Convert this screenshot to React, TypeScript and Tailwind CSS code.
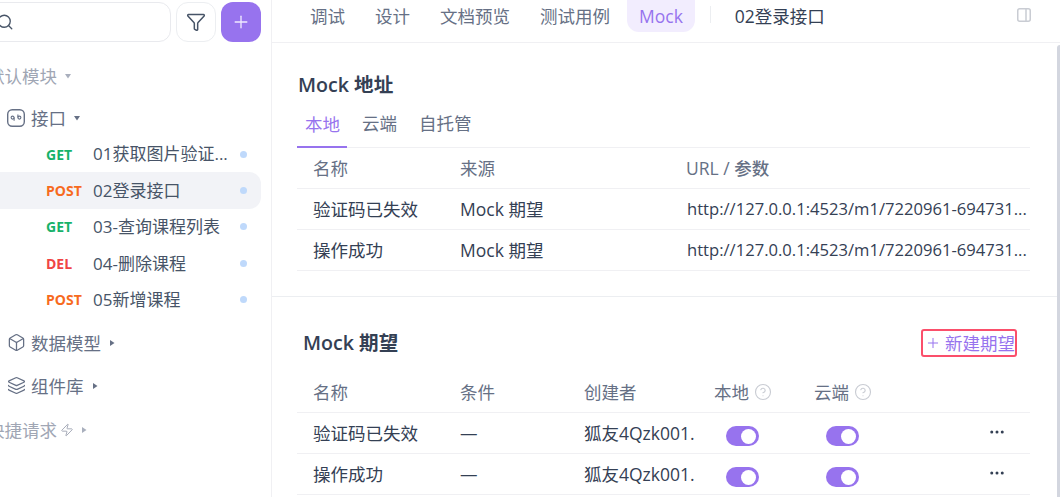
import { Filter, Plus, Search, Box, Layers, Zap, CircleHelp, Ellipsis } from "lucide-react";

const font = "font-['Open_Sans','Noto_Sans_CJK_SC',sans-serif]";

const apis = [
  { method: "GET", color: "text-[#17b26a]", name: "01获取图片验证...", active: false },
  { method: "POST", color: "text-[#f76a1e]", name: "02登录接口", active: true },
  { method: "GET", color: "text-[#17b26a]", name: "03-查询课程列表", active: false },
  { method: "DEL", color: "text-[#f04444]", name: "04-删除课程", active: false },
  { method: "POST", color: "text-[#f76a1e]", name: "05新增课程", active: false },
];

function Caret({ down = false, light = false }: { down?: boolean; light?: boolean }) {
  return (
    <svg width="8" height="8" viewBox="0 0 8 8" className={light ? "text-[#a9afbd]" : "text-[#667085]"}>
      <path d={down ? "M1 2h6L4 6.5z" : "M2 1v6l4.5-3z"} fill="currentColor" />
    </svg>
  );
}

function ApiIcon() {
  return (
    <svg width="18" height="18" viewBox="0 0 18 18" fill="none" className="text-[#667085]">
      <rect x="0.7" y="0.7" width="16.6" height="16.6" rx="4.5" stroke="currentColor" strokeWidth="1.4" />
      <circle cx="5.6" cy="8.6" r="1.5" stroke="currentColor" strokeWidth="1.1" />
      <circle cx="12.4" cy="8.6" r="1.5" stroke="currentColor" strokeWidth="1.1" />
      <path d="M7.1 8.6v3.2M10.9 8.6V5.4" stroke="currentColor" strokeWidth="1.1" />
    </svg>
  );
}

function PanelIcon() {
  return (
    <svg width="14" height="14" viewBox="0 0 14 14" fill="none" className="text-[#c9ccd3]">
      <rect x="0.75" y="0.75" width="12.5" height="12.5" rx="2" stroke="currentColor" strokeWidth="1.5" />
      <path d="M9 1v12" stroke="currentColor" strokeWidth="1.5" />
    </svg>
  );
}

function Sidebar() {
  return (
    <aside className="w-[272px] h-full shrink-0 border-r border-[#f0f0f3] flex flex-col">
      <div className="flex items-center gap-[5px] pt-[2px] ml-[-20px]">
        <div className="w-[191px] h-[40px] rounded-xl border border-[#e9eaee] flex items-center pl-[15px]">
          <Search size={18} strokeWidth={1.8} className="text-[#475467]" />
        </div>
        <div className="w-[40px] h-[40px] rounded-xl border border-[#eceef1] flex items-center justify-center">
          <Filter size={20} strokeWidth={1.8} className="text-[#475467]" />
        </div>
        <div className="w-[40px] h-[40px] rounded-xl bg-[#9773ee] flex items-center justify-center">
          <Plus size={20} strokeWidth={1.6} className="text-[#f0eaff]" />
        </div>
      </div>

      <div className="mt-[22px] h-[24px] flex items-center gap-[7px] ml-[-13px] text-[17.5px] text-[#a0a6b4]">
        默认模块 <Caret down light />
      </div>

      <div className="mt-[18px] h-[24px] flex items-center ml-[7px] text-[17.5px] text-[#667085]">
        <ApiIcon />
        <span className="ml-[6px] mr-[7px]">接口</span>
        <Caret down />
      </div>

      <ul className="mt-[6px] flex flex-col">
        {apis.map((a) => (
          <li
            key={a.name}
            className={`h-[36.4px] flex items-center pl-[46px] pr-[14px] mr-[10px] rounded-r-xl ${a.active ? "bg-[#f2f3f7]" : ""}`}
          >
            <span className={`w-[47px] text-[14px] font-bold ${a.color}`}>{a.method}</span>
            <span className="flex-1 text-[17px] text-[#475467] whitespace-nowrap">{a.name}</span>
            <span className="w-[7px] h-[7px] rounded-full bg-[#bfd9fb]" />
          </li>
        ))}
      </ul>

      <div className="mt-[13px] h-[24px] flex items-center ml-[7px] text-[17.5px] text-[#667085]">
        <Box size={19} strokeWidth={1.6} />
        <span className="ml-[5px] mr-[7px]">数据模型</span>
        <Caret />
      </div>
      <div className="mt-[19px] h-[24px] flex items-center ml-[7px] text-[17.5px] text-[#667085]">
        <Layers size={19} strokeWidth={1.6} />
        <span className="ml-[5px] mr-[7px]">组件库</span>
        <Caret />
      </div>
      <div className="mt-[20px] h-[24px] flex items-center ml-[-13px] text-[17.5px] text-[#a0a6b4]">
        <span>快捷请求</span>
        <Zap size={14} strokeWidth={1.6} className="ml-[3px] mr-[6px]" />
        <Caret light />
      </div>
    </aside>
  );
}

function TopTabs() {
  return (
    <div className="h-[43px] border-b border-[#f0f0f3] flex items-start pl-[38px] pr-[29px] text-[17.5px] text-[#667085]">
      <div className="h-[32px] flex items-center gap-[30px]">
        <span>调试</span>
        <span>设计</span>
        <span>文档预览</span>
        <span>测试用例</span>
      </div>
      <span className="ml-[17px] h-[32px] px-[12px] flex items-center rounded-b-xl bg-[#f2edfe] text-[#9773ee]">Mock</span>
      <span className="ml-[15px] mt-[6px] w-px h-[17px] bg-[#eceef1]" />
      <span className="ml-[24px] h-[32px] flex items-center text-[#344054]">02登录接口</span>
      <span className="ml-auto mt-[8px]"><PanelIcon /></span>
    </div>
  );
}

function MockUrls() {
  const rows = [
    ["验证码已失效", "Mock 期望"],
    ["操作成功", "Mock 期望"],
  ];
  const url = "http://127.0.0.1:4523/m1/7220961-694731...";
  return (
    <section className="pl-[25px] pr-[30px] pb-[25px] border-b border-[#eceef1]">
      <h2 className="pt-[28px] h-[54px] pl-px text-[19.6px] font-semibold text-[#344054] leading-[28px]">Mock 地址</h2>
      <div className="h-[51px] border-b border-[#f0f0f3] flex text-[17.5px] text-[#667085] items-end">
        <span className="h-[39px] w-[50px] pl-[8px] pt-[2px] border-b-2 border-[#9773ee] text-[#9773ee] mb-[-1px]">本地</span>
        <span className="h-[39px] pt-[2px] ml-[15px]">云端</span>
        <span className="h-[39px] pt-[2px] ml-[22px]">自托管</span>
      </div>
      <div className="h-[41px] border-b border-[#f0f0f3] flex items-center text-[17.5px] text-[#667085]">
        <span className="w-[163px] pl-[16px]">名称</span>
        <span className="w-[226px]">来源</span>
        <span className="font-medium">URL / 参数</span>
      </div>
      {rows.map(([name, source]) => (
        <div key={name} className="h-[41px] border-b border-[#f0f0f3] flex items-center text-[17.5px] text-[#344054]">
          <span className="w-[163px] pl-[16px]">{name}</span>
          <span className="w-[227px]">{source}</span>
          <span className="text-[16.6px] whitespace-nowrap">{url}</span>
        </div>
      ))}
    </section>
  );
}

function Toggle() {
  return (
    <span className="mt-[6px] w-[33px] h-[20px] rounded-full bg-[#9773ee] flex items-center justify-end pr-[3px]">
      <span className="w-[15px] h-[15px] rounded-full bg-white" />
    </span>
  );
}

function MockExpect() {
  const rows = ["验证码已失效", "操作成功"];
  return (
    <section className="pl-[25px] pr-[30px]">
      <div className="mt-[31px] h-[30px] flex items-center justify-between pl-[6px] pr-[13px]">
        <h2 className="text-[19.6px] font-semibold text-[#344054]">Mock 期望</h2>
        <button className="h-[28px] pl-[2px] pr-0 flex items-center gap-[4px] rounded-[3px] border-2 border-[#fb4f6b] text-[17.5px] text-[#9773ee] whitespace-nowrap">
          <Plus size={16} strokeWidth={1.5} />
          新建期望
        </button>
      </div>
      <div className="mt-[14px] h-[41px] border-b border-[#f0f0f3] flex items-center text-[17.5px] text-[#667085]">
        <span className="w-[163px] pl-[16px]">名称</span>
        <span className="w-[124px]">条件</span>
        <span className="w-[130px]">创建者</span>
        <span className="w-[100px] flex items-center gap-[5px]">
          本地 <CircleHelp size={18} strokeWidth={1.5} className="text-[#c9ccd3]" />
        </span>
        <span className="flex items-center gap-[5px]">
          云端 <CircleHelp size={18} strokeWidth={1.5} className="text-[#c9ccd3]" />
        </span>
      </div>
      {rows.map((name) => (
        <div key={name} className="h-[41px] border-b border-[#f0f0f3] flex items-center text-[17.5px] text-[#344054]">
          <span className="w-[163px] pl-[16px]">{name}</span>
          <span className="w-[124px]">—</span>
          <span className="w-[142px]">狐友4Qzk001.</span>
          <span className="w-[100px]"><Toggle /></span>
          <span className="w-[100px]"><Toggle /></span>
          <Ellipsis size={18} strokeWidth={2} className="ml-[62px] mt-[-3px] text-[#344054]" />
        </div>
      ))}
    </section>
  );
}

export default function App() {
  return (
    <div className={`relative w-[1060px] h-[497px] overflow-hidden bg-white flex ${font}`}>
      <Sidebar />
      <main className="flex-1 min-w-0 h-full">
        <TopTabs />
        <MockUrls />
        <MockExpect />
      </main>
      <div className="absolute right-0 top-[45px] bottom-0 w-[3px] rounded-tl-sm bg-[#d3d6df]" />
    </div>
  );
}
